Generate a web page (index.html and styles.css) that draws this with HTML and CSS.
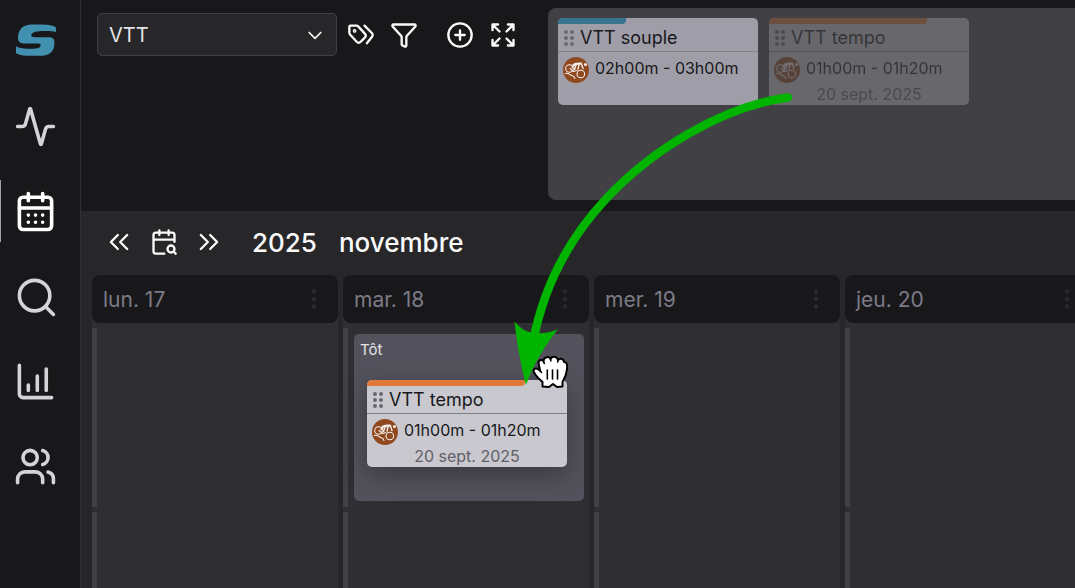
FILE: index.html
```
<!DOCTYPE html>
<html lang="fr">
<head>
<meta charset="utf-8">
<meta name="viewport" content="width=device-width, initial-scale=1">
<title>Calendrier</title>
<link rel="stylesheet" href="styles.css">
</head>
<body>
<svg class="sprite" aria-hidden="true">
  <symbol id="grip" viewBox="0 0 10 18"><g fill="currentColor"><circle cx="2" cy="3" r="2"/><circle cx="8" cy="3" r="2"/><circle cx="2" cy="9" r="2"/><circle cx="8" cy="9" r="2"/><circle cx="2" cy="15" r="2"/><circle cx="8" cy="15" r="2"/></g></symbol>
  <symbol id="dots" viewBox="0 0 6 20"><g fill="currentColor"><circle cx="3" cy="2.500" r="2.200"/><circle cx="3" cy="10" r="2.200"/><circle cx="3" cy="17.500" r="2.200"/></g></symbol>
  <symbol id="bike" viewBox="0 0 26 26">
    <circle cx="13" cy="13" r="13" fill="#90481f"/>
    <g fill="none" stroke="#f4efed" stroke-width="1.100" stroke-linecap="round" stroke-linejoin="round">
      <circle cx="6.500" cy="11.500" r="3.800"/><circle cx="17.800" cy="17" r="3.800"/>
      <path d="M2.500 16.500c2.500-1 3.500.5 5 1.500s3.500 0 4.500 3.500M7 11.500l3.500 3 3.500-1"/>
      <path d="M9.500 10c1-3 3-3.500 8.500-3.300" stroke-width="2.200"/>
      <path d="M18.500 7l1.500 4.500M13 8l-1.500 4.500M16 8l-1 4" stroke-width="1.400"/>
    </g>
    <circle cx="22.500" cy="7.500" r="1.500" fill="#f4efed"/>
  </symbol>
</svg>

<div class="app">
  <nav class="sidebar" aria-label="Navigation principale">
    <a class="brand" href="#" aria-label="Accueil">
      <svg width="42" height="34" viewBox="0 0 42 34" fill="#4190b0"><path d="M41 9V4.500C38.500 2.200 32 1.500 25 1.500h-8C8 1.500 3 6.500 3 15c0 4 2.500 5.500 7 5.500h12c3.500 0 4 .8 3.500 2.500-.6 2-3 2.700-7.500 2.700H13c-6 0-10-1-12-2.500V30c2.500 2 7.500 2.800 14 2.800h9c10 0 15.500-3.300 15.500-13.300 0-4-2-5.300-6.500-5.300H20c-3 0-4-.6-3.700-2.200.4-2 2.200-3 5.700-3.500 7-.7 15-.5 19 .5z"/></svg>
    </a>
    <a class="nav-item" href="#" aria-label="Activité">
      <svg width="43" height="43" viewBox="0 0 24 24"><path d="M22 12h-2.480a2 2 0 0 0-1.930 1.460l-2.350 8.360a.25.25 0 0 1-.48 0L9.240 2.180a.25.25 0 0 0-.48 0l-2.350 8.360A2 2 0 0 1 4.490 12H2"/></svg>
    </a>
    <a class="nav-item nav-item--active" href="#" aria-label="Calendrier" aria-current="page">
      <svg width="43" height="43" viewBox="0 0 24 24"><path d="M8 2v4M16 2v4M3 10h18M8 14h.01M12 14h.01M16 14h.01M8 18h.01M12 18h.01M16 18h.01"/><rect x="3" y="4" width="18" height="18" rx="2"/></svg>
    </a>
    <a class="nav-item" href="#" aria-label="Recherche">
      <svg width="43" height="43" viewBox="0 0 24 24"><circle cx="11.500" cy="11.500" r="8.500"/><path d="m22 22-4.300-4.300"/></svg>
    </a>
    <a class="nav-item" href="#" aria-label="Statistiques">
      <svg width="43" height="43" viewBox="0 0 24 24"><path d="M3 3v16a2 2 0 0 0 2 2h16M18 17V5M13 17V9M8 17v-3"/></svg>
    </a>
    <a class="nav-item" href="#" aria-label="Groupes">
      <svg width="43" height="43" viewBox="0 0 24 24"><path d="M16 21v-2a4 4 0 0 0-4-4H6a4 4 0 0 0-4 4v2"/><circle cx="9" cy="7" r="4"/><path d="M22 21v-2a4 4 0 0 0-3-3.870M16 3.130a4 4 0 0 1 0 7.750"/></svg>
    </a>
  </nav>

  <main class="main">
    <section class="library">
      <div class="toolbar">
        <div class="select">
          <select aria-label="Sport"><option>VTT</option></select>
          <svg class="select-arrow" width="20" height="20" viewBox="0 0 24 24"><path d="m5 9 7 7 7-7"/></svg>
        </div>
        <div class="actions">
          <button class="icon-button" aria-label="Étiquettes"><svg width="28" height="28" viewBox="0 0 24 24"><path d="m15 4 6.300 6.300a2.400 2.400 0 0 1 0 3.400L17 19"/><path d="M9.590 4.590A2 2 0 0 0 8.170 4H3a1 1 0 0 0-1 1v5.170a2 2 0 0 0 .59 1.420l5.700 6.200a2.430 2.430 0 0 0 3.420 0l3.580-3.580a2.430 2.430 0 0 0 0-3.420z"/><circle cx="6.500" cy="8.500" r=".6"/></svg></button>
          <button class="icon-button" aria-label="Filtrer"><svg width="28" height="28" viewBox="0 0 24 24"><path d="M10 20a1 1 0 0 0 .55.9l2 1A1 1 0 0 0 14 21v-7a2 2 0 0 1 .52-1.340l7.220-7.990A1 1 0 0 0 21 3H3a1 1 0 0 0-.74 1.670l7.220 7.990A2 2 0 0 1 10 14z"/></svg></button>
        </div>
        <div class="actions">
          <button class="icon-button" aria-label="Ajouter"><svg width="28" height="28" viewBox="0 0 24 24"><circle cx="12" cy="12" r="10"/><path d="M8 12h8M12 8v8"/></svg></button>
          <button class="icon-button" aria-label="Agrandir"><svg width="28" height="28" viewBox="0 0 24 24"><path d="m15 15 6 6m-6-12 6-6M21 16.200V21h-4.800M21 7.800V3h-4.800M3 16.200V21h4.800M3 21l6-6M3 7.800V3h4.800M9 9 3 3"/></svg></button>
        </div>
      </div>
      <div class="tray">
        <article class="card card--muted">
          <div class="card-bar"><div class="card-fill card-fill--blue" style="width:34%"></div></div>
          <h3 class="card-title"><svg class="grip" width="10" height="18"><use href="#grip"/></svg>VTT souple</h3>
          <div class="card-body">
            <svg width="26" height="26"><use href="#bike"/></svg>
            <p class="card-time">02h00m - 03h00m</p>
          </div>
        </article>
        <article class="card card--ghost">
          <div class="card-bar"><div class="card-fill" style="width:79%"></div></div>
          <h3 class="card-title"><svg class="grip" width="10" height="18"><use href="#grip"/></svg>VTT tempo</h3>
          <div class="card-body">
            <svg width="26" height="26"><use href="#bike"/></svg>
            <p class="card-time">01h00m - 01h20m</p>
          </div>
          <p class="card-date">20 sept. 2025</p>
        </article>
      </div>
    </section>

    <section class="calendar">
      <header class="calendar-nav">
        <button class="icon-button" aria-label="Semaine précédente"><svg width="28" height="28" viewBox="0 0 24 24"><path d="m11 18-6-6 6-6M19 18l-6-6 6-6"/></svg></button>
        <button class="icon-button" aria-label="Choisir une date"><svg width="28" height="28" viewBox="0 0 24 24"><path d="M16 2v4M21 11.750V6a2 2 0 0 0-2-2H5a2 2 0 0 0-2 2v14a2 2 0 0 0 2 2h7.250M22 22l-1.880-1.880M3 10h18M8 2v4"/><circle cx="18" cy="18" r="3"/></svg></button>
        <button class="icon-button" aria-label="Semaine suivante"><svg width="28" height="28" viewBox="0 0 24 24"><path d="m5 18 6-6-6-6M13 18l6-6-6-6"/></svg></button>
        <h2 class="period"><span>2025</span><span>novembre</span></h2>
      </header>
      <div class="days">
        <section class="day">
          <header class="day-head"><h3>lun. 17</h3><button class="day-menu" aria-label="Menu du 17"><svg width="6" height="20"><use href="#dots"/></svg></button></header>
          <div class="slot"></div><div class="slot"></div>
        </section>
        <section class="day">
          <header class="day-head"><h3>mar. 18</h3><button class="day-menu" aria-label="Menu du 18"><svg width="6" height="20"><use href="#dots"/></svg></button></header>
          <div class="slot">
            <div class="dropzone">
              <h4>Tôt</h4>
              <article class="card card--dragged">
                <div class="card-bar"><div class="card-fill" style="width:79%"></div></div>
                <h3 class="card-title"><svg class="grip" width="10" height="18"><use href="#grip"/></svg>VTT tempo</h3>
                <div class="card-body">
                  <svg width="26" height="26"><use href="#bike"/></svg>
                  <p class="card-time">01h00m - 01h20m</p>
                </div>
                <p class="card-date">20 sept. 2025</p>
              </article>
            </div>
          </div>
          <div class="slot"></div>
        </section>
        <section class="day">
          <header class="day-head"><h3>mer. 19</h3><button class="day-menu" aria-label="Menu du 19"><svg width="6" height="20"><use href="#dots"/></svg></button></header>
          <div class="slot"></div><div class="slot"></div>
        </section>
        <section class="day">
          <header class="day-head"><h3>jeu. 20</h3><button class="day-menu" aria-label="Menu du 20"><svg width="6" height="20"><use href="#dots"/></svg></button></header>
          <div class="slot"></div><div class="slot"></div>
        </section>
      </div>
    </section>
  </main>

  <svg class="drag-overlay" width="1075" height="588" viewBox="0 0 1075 588" aria-hidden="true">
    <path d="M788 97.500C722 106 650 151 605 200C566 242 543 290 533 342" fill="none" stroke="#00b400" stroke-width="8.500" stroke-linecap="round"/>
    <path d="M514.500 321.500C520 328 525 331.500 533 333C542 334 550 333 558 329C546 345 534 362 526 385C521 366 517 344 514.500 321.500Z" fill="#00b400"/>
    <path d="M542.500 386.500V382C539 379 535 375 533.700 371.500C533 368 537 367.500 540 370.500L538.500 363C538.500 359.500 542.500 359 543.500 361.500C543.500 356.500 549 356 550.500 359C552 355.500 557 356 558 360C560.500 357.500 564 359 564 362C567 362 567.500 365 567 369C566.500 375 565 378 562.500 382V386.500L557 387L553 384L549 387Z" fill="#fff" stroke="#000" stroke-width="2" stroke-linejoin="round"/>
    <path d="M540 370.500l1.500 2M543.500 361.500l.8 2M550.500 359l.3 2M558 360l-.3 2M547.300 370v9M552.500 370v9M557.500 370v9" fill="none" stroke="#000" stroke-width="1.600" stroke-linecap="round"/>
  </svg>
</div>
</body>
</html>
```

FILE: styles.css
```
* {
  box-sizing: border-box;
  margin: 0;
}

body {
  font-family: Inter, "Liberation Sans", sans-serif;
  color: #fafafa;
  background: #18181a;
  overflow: hidden;
}

svg {
  display: block;
  flex: none;
}

button {
  padding: 0;
  border: 0;
  background: none;
  color: inherit;
  cursor: pointer;
}

.sprite {
  position: absolute;
  width: 0;
  height: 0;
}

.app {
  position: relative;
  display: flex;
  min-height: 100vh;
}

/* Sidebar */
.sidebar {
  flex: none;
  width: 81px;
  border-right: 1px solid #303033;
}

.brand,
.nav-item {
  display: flex;
  align-items: center;
  height: 85px;
  padding-left: 15px;
  color: #d4d4d8;
}

.brand {
  height: 84px;
  padding-bottom: 4px;
}

.nav-item {
  position: relative;
  padding-left: 14px;
}

.nav-item svg,
.icon-button svg,
.select-arrow {
  fill: none;
  stroke: currentColor;
  stroke-width: 2;
  stroke-linecap: round;
  stroke-linejoin: round;
}

.nav-item--active {
  color: #fff;
}

.nav-item--active::before {
  content: "";
  position: absolute;
  left: 0;
  top: 11px;
  bottom: 12px;
  width: 1px;
  background: #a1a1aa;
}

/* Library */
.main {
  flex: 1;
  min-width: 0;
  display: flex;
  flex-direction: column;
}

.library {
  display: flex;
  justify-content: space-between;
  height: 211px;
  padding: 8px 0 11px 16px;
}

.toolbar {
  display: flex;
  align-items: center;
  align-self: flex-start;
  gap: 28px;
  padding-top: 5px;
}

.select {
  position: relative;
  width: 240px;
  margin-right: -18px;
}

.select select {
  appearance: none;
  width: 100%;
  height: 43px;
  padding: 0 11px;
  border: 1px solid #3f3f46;
  border-radius: 5px;
  background: #27272a;
  color: #e4e4e7;
  font: 20px Inter, "Liberation Sans", sans-serif;
}

.select-arrow {
  position: absolute;
  right: 12px;
  top: 12px;
  pointer-events: none;
}

.actions {
  display: flex;
  align-items: center;
  gap: 15px;
}

.tray {
  flex: none;
  display: flex;
  align-items: flex-start;
  gap: 11px;
  width: calc(100% - 451px);
  padding: 10px;
  border-radius: 8px 0 0 8px;
  background: #404045;
}

/* Workout cards */
.card {
  flex: none;
  width: 200px;
  height: 87px;
  border-radius: 5px;
  background: #c9c8cf;
  color: #18181b;
  overflow: hidden;
}

.card--muted {
  background: #9f9ea8;
}

.card--ghost {
  background: #d0d0d4;
  opacity: 0.28;
}

.card--dragged {
  margin: 21px 0 0 13px;
  box-shadow: 0 8px 24px #00000050;
}

.card-fill {
  height: 6px;
  border-bottom-right-radius: 4px;
  background: #e07838;
}

.card-fill--blue {
  background: #377490;
}

.card-title {
  display: flex;
  align-items: center;
  gap: 6px;
  height: 28px;
  padding-left: 6px;
  border-bottom: 1px solid #808087;
  font-size: 18px;
  font-weight: 400;
}

.grip {
  color: #68686f;
}

.card-body {
  display: flex;
  gap: 6px;
  padding: 5px 5px 0;
}

.card-time {
  font-size: 16px;
  line-height: 22px;
}

.card-date {
  font-size: 16px;
  line-height: 22px;
  text-align: center;
  color: #606067;
}

/* Calendar */
.calendar {
  flex: 1;
  display: flex;
  flex-direction: column;
  padding-left: 11px;
  background: #27272a;
}

.calendar-nav {
  display: flex;
  align-items: center;
  gap: 17px;
  height: 64px;
  padding: 0 0 2px 13px;
}

.period {
  display: flex;
  gap: 22px;
  margin-left: 12px;
  font-size: 26px;
  font-weight: 500;
}

.days {
  flex: 1;
  display: flex;
  gap: 5px;
}

.day {
  flex: none;
  display: flex;
  flex-direction: column;
  gap: 5px;
  width: 246px;
  border-radius: 8px 8px 0 0;
  background: #2f2e33;
}

.day-head {
  display: flex;
  align-items: center;
  justify-content: space-between;
  height: 48px;
  padding: 0 21px 0 11px;
  border-radius: 8px;
  background: #18181a;
  color: #7c7b85;
}

.day-head h3 {
  font-size: 21px;
  font-weight: 400;
}

.day-menu {
  color: #29292c;
}

.slot {
  height: 179px;
  padding: 6px 5px 6px 6px;
  border-left: 5px solid #404045;
}

.slot:last-child {
  flex: 1;
  height: auto;
}

.dropzone {
  height: 100%;
  padding: 6px 0 0;
  border-radius: 5px;
  background: #53525c;
}

.dropzone h4 {
  padding-left: 6px;
  font-size: 15px;
  font-weight: 400;
  line-height: 19px;
  color: #e4e4e7;
}

/* Drag path and hand, drawn above the page */
.drag-overlay {
  position: absolute;
  left: 0;
  top: 0;
  pointer-events: none;
}
```
